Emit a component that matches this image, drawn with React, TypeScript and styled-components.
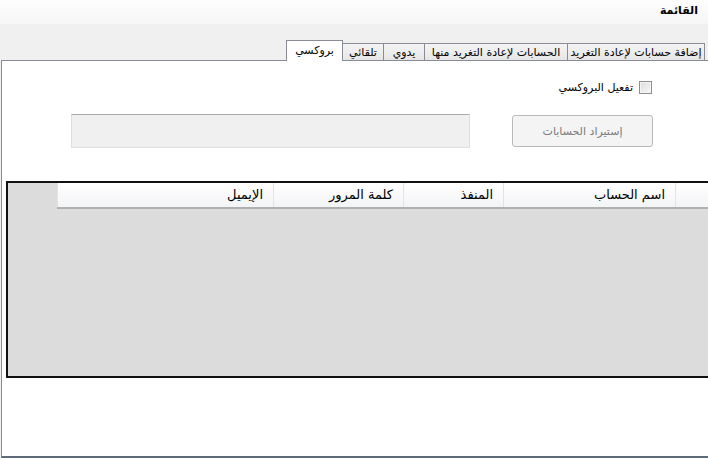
import styled, { createGlobalStyle } from "styled-components";

const GlobalStyle = createGlobalStyle`
  html, body {
    margin: 0;
    padding: 0;
    background: #f0f0f0;
    overflow: hidden;
  }
  * {
    box-sizing: border-box;
  }
`;

const Window = styled.div`
  width: 708px;
  height: 458px;
  display: flex;
  flex-direction: column;
  direction: rtl;
  font-family: "DejaVu Sans", Tahoma, sans-serif;
  font-size: 11px;
  color: #000;
  background: #f0f0f0;
`;

const TitleBar = styled.div`
  height: 24px;
  padding: 4px 10px 0 0;
  background: linear-gradient(#fdfdfd, #f6f6f6);
  font-weight: bold;
  font-size: 11px;
`;

const TabStrip = styled.div`
  height: 37px;
  display: flex;
  align-items: flex-end;
  padding-right: 3px;
  position: relative;
  z-index: 1;
  margin-bottom: -1px;
`;

const Tab = styled.div<{ $w: number; $active?: boolean }>`
  width: ${(p) => p.$w}px;
  height: ${(p) => (p.$active ? 21 : 18)}px;
  display: flex;
  align-items: center;
  justify-content: center;
  white-space: nowrap;
  border: 1px solid #898c95;
  border-bottom: ${(p) => (p.$active ? "none" : "1px solid #898c95")};
  margin-left: -1px;
  padding-bottom: ${(p) => (p.$active ? 2 : 0)}px;
  background: ${(p) =>
    p.$active ? "#fff" : "linear-gradient(#f4f4f4, #e6e6e6)"};
  font-size: 11px;
`;

const Panel = styled.div`
  flex: 1;
  margin-left: 1px;
  background: #fff;
  border: 1px solid #898c95;
  border-right: none;
  border-bottom: 2px solid #5d6b79;
  display: flex;
  flex-direction: column;
`;

const CheckRow = styled.label`
  display: flex;
  align-items: center;
  gap: 6px;
  margin: 19px 56px 0 0;
  height: 14px;
  font-size: 11px;
`;

const CheckBox = styled.span`
  width: 13px;
  height: 13px;
  border: 1px solid #8e8f8f;
  background: linear-gradient(135deg, #dcdcdc, #f8f8f8);
  box-shadow: inset 0 0 0 1px #f4f4f4;
`;

const ImportRow = styled.div`
  display: flex;
  align-items: center;
  margin: 20px 55px 0 0;
  gap: 42px;
`;

const ImportButton = styled.button`
  width: 141px;
  height: 32px;
  border: 1px solid #b9b9b9;
  border-radius: 3px;
  background: #f4f4f4;
  color: #7a7a7a;
  font-family: inherit;
  font-size: 11px;
  padding: 0;
`;

const PathBox = styled.div`
  width: 399px;
  height: 34px;
  background: #f0f0f0;
  border: 1px solid #dedede;
  border-top-color: #ababab;
`;

const Grid = styled.div`
  margin: 33px 0 0 4px;
  height: 197px;
  background: #dcdcdc;
  border: 2px solid #111;
  border-right: none;
`;

const HeaderRow = styled.div`
  display: flex;
  height: 26px;
  margin-left: 49px;
  border-bottom: 2px solid #b0b0b0;
  background: linear-gradient(#ffffff, #f3f4f6);
`;

const HeaderCell = styled.div<{ $w: number }>`
  width: ${(p) => p.$w}px;
  flex: ${(p) => (p.$w ? "none" : 1)};
  padding: 4px 10px 0 0;
  border-left: 1px solid #e2e3e5;
  font-size: 13px;
  white-space: nowrap;
`;

const columns = [
  { title: "", w: 33 },
  { title: "اسم الحساب", w: 172 },
  { title: "المنفذ", w: 100 },
  { title: "كلمة المرور", w: 130 },
  { title: "الإيميل", w: 0 },
];

const tabs = [
  { label: "إضافة حسابات لإعادة التغريد", w: 138 },
  { label: "الحسابات لإعادة التغريد منها", w: 144 },
  { label: "يدوي", w: 42 },
  { label: "تلقائي", w: 42 },
  { label: "بروكسي", w: 57, active: true },
];

const App = () => {
  return (
    <Window>
      <GlobalStyle />
      <TitleBar>القائمة</TitleBar>
      <TabStrip>
        {tabs.map((t) => (
          <Tab key={t.label} $w={t.w} $active={t.active}>
            {t.label}
          </Tab>
        ))}
      </TabStrip>
      <Panel>
        <CheckRow>
          <CheckBox />
          تفعيل البروكسي
        </CheckRow>
        <ImportRow>
          <ImportButton disabled>إستيراد الحسابات</ImportButton>
          <PathBox />
        </ImportRow>
        <Grid>
          <HeaderRow>
            {columns.map((c, i) => (
              <HeaderCell key={i} $w={c.w}>
                {c.title}
              </HeaderCell>
            ))}
          </HeaderRow>
        </Grid>
      </Panel>
    </Window>
  );
};

export default App;
